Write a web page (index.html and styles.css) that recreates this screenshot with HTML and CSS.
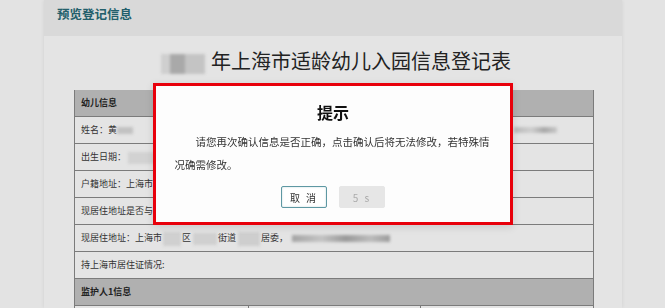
FILE: index.html
```html
<!DOCTYPE html>
<html lang="zh-CN">
  <head>
    <meta charset="UTF-8" />
    <meta name="viewport" content="width=device-width, initial-scale=1.0" />
    <title>预览登记信息</title>
    <link rel="stylesheet" href="styles.css">
  </head>
  <body>
    <div class="page">
      <div class="page-header">预览登记信息</div>
      <div class="page-body">
        <h1 class="form-title"><span class="mask mask-year"></span>年上海市适龄幼儿入园信息登记表</h1>

        <div class="info-table">
          <div class="row head">幼儿信息</div>
          <div class="row split-name">
            <span>姓名：黄<span class="mask mask-sm"></span></span>
            <span class="mask mask-id"></span>
          </div>
          <div class="row">出生日期：<span class="mask mask-date"></span></div>
          <div class="row">户籍地址：上海市</div>
          <div class="row">现居住地址是否与户籍地址一致：是</div>
          <div class="row">
            现居住地址：上海市<span class="mask mask-a"></span>区<span class="mask mask-b"></span>街道<span class="mask mask-c"></span>居委，<span class="mask mask-long"></span>
          </div>
          <div class="row">持上海市居住证情况:</div>
          <div class="row head">监护人1信息</div>
          <div class="row cols">
            <div class="cell"></div>
            <div class="cell"></div>
            <div class="cell"></div>
          </div>
        </div>
      </div>
    </div>

    <!-- 确认弹窗 -->
    <div class="overlay">
      <div class="dialog">
        <h2 class="dialog-title">提示</h2>
        <p class="dialog-text">
          请您再次确认信息是否正确，点击确认后将无法修改，若特殊情况确需修改。
        </p>
        <div class="dialog-actions">
          <button class="btn btn-cancel">取 消</button>
          <button class="btn btn-wait" disabled>5 s</button>
        </div>
      </div>
    </div>
  </body>
</html>
```

FILE: styles.css
```css
* {
  box-sizing: border-box;
  margin: 0;
  padding: 0;
}

body {
  font-family: "Noto Sans CJK SC", "Noto Sans", sans-serif;
  background: #e3e3e3;
  width: 665px;
  height: 308px;
  overflow: hidden;
  color: #333;
}

.page {
  width: 578px;
  margin-left: 44px;
  height: 308px;
  overflow: hidden;
  background: #e4e4e4;
  box-shadow: 0 0 4px rgba(0, 0, 0, 0.08);
}

.page-header {
  height: 36px;
  background: #d9d9d9;
  padding-left: 13px;
  line-height: 28px;
  font-size: 12.5px;
  font-weight: bold;
  color: #235f6b;
}

.page-body {
  padding: 11px 28px 0 30px;
}

.form-title {
  text-align: center;
  font-size: 20px;
  font-weight: normal;
  line-height: 28px;
  color: #222;
  margin-left: 4px;
}

.mask {
  display: inline-block;
  vertical-align: middle;
  background: #b5b5b5;
  filter: blur(1.5px);
}

.mask-year {
  width: 44px;
  height: 20px;
  margin-right: 6px;
  background: linear-gradient(90deg, #cfcfcf 0 20%, #a9a9a9 20% 55%, #c4c4c4 55% 100%);
}

.info-table {
  margin-top: 15px;
  border-left: 1px solid #7b7b7b;
  border-right: 1px solid #7b7b7b;
  font-size: 9px;
}

.row {
  height: 27px;
  line-height: 26px;
  padding-left: 6px;
  border-bottom: 1px solid #7b7b7b;
  white-space: nowrap;
  overflow: hidden;
}

.row.head {
  background: #b0b0b0;
  font-weight: bold;
  color: #222;
}

.split-name {
  display: flex;
  justify-content: space-between;
  align-items: center;
  padding-right: 36px;
}

.mask-sm {
  width: 16px;
  height: 7px;
  background: #c2c2c2;
}

.mask-id {
  width: 43px;
  height: 6px;
  background: linear-gradient(90deg, #b8b8b8, #cfcfcf 40%, #a8a8a8 70%, #c8c8c8);
}

.mask-date {
  width: 34px;
  height: 12px;
  margin-left: 2px;
  background: #d2d2d2;
}

.mask-a {
  width: 18px;
  height: 14px;
  margin: 0 1px;
  background: #d0d0d0;
}

.mask-b {
  width: 24px;
  height: 12px;
  margin: 0 1px 0 2px;
  background: #d0d0d0;
}

.mask-c {
  width: 22px;
  height: 14px;
  margin: 0 1px 0 2px;
  background: #cecece;
}

.mask-long {
  width: 98px;
  height: 7px;
  margin-left: 4px;
  background: linear-gradient(90deg, #a4a4a4, #c4c4c4 30%, #999 55%, #bcbcbc 80%, #9c9c9c);
}

.row.cols {
  display: grid;
  grid-template-columns: 173px 172px 1fr;
  padding-left: 0;
  border-bottom: none;
}

.cell + .cell {
  border-left: 1px solid #7b7b7b;
}

.overlay {
  position: fixed;
  inset: 0;
  display: flex;
  align-items: center;
  justify-content: center;
}

.dialog {
  width: 360px;
  height: 142px;
  background: #fdfdfd;
  border: 3px solid #e8000b;
  padding: 15px 18px 0 19px;
  box-shadow: 0 2px 8px rgba(0, 0, 0, 0.12);
}

.dialog-title {
  text-align: center;
  font-size: 16px;
  line-height: 22px;
  color: #111;
}

.dialog-text {
  margin-top: 7px;
  font-size: 10.5px;
  line-height: 23px;
  text-indent: 2em;
  color: #333;
}

.dialog-actions {
  margin-top: 10px;
  display: flex;
  justify-content: center;
  gap: 12px;
}

.btn {
  width: 46px;
  height: 22px;
  font-family: inherit;
  font-size: 10px;
  letter-spacing: 2px;
  border-radius: 2px;
}

.btn-cancel {
  background: #fff;
  border: 1px solid #5e98a3;
  box-shadow: inset 0 0 2px rgba(94, 152, 163, 0.4);
  color: #333;
}

.btn-wait {
  background: #e6e6e6;
  border: 1px solid #e6e6e6;
  color: #aaa;
}
```
